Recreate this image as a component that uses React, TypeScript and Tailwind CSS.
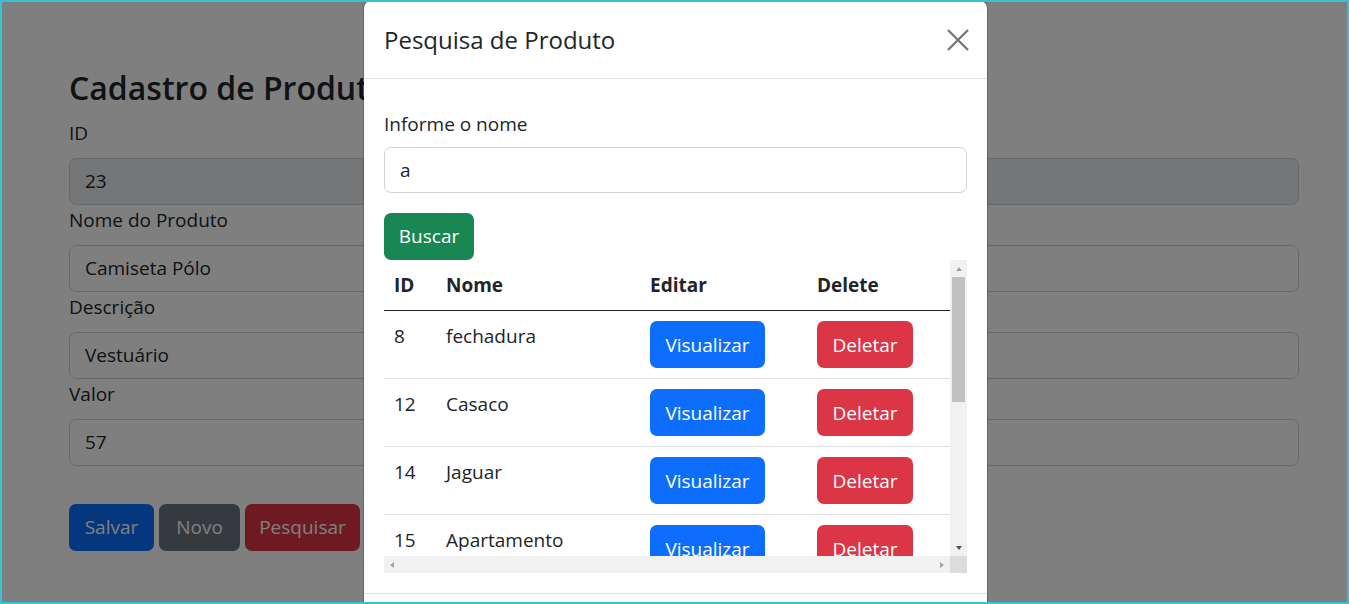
import React from 'react';

const produtos = [
  { id: 8, nome: 'fechadura' },
  { id: 12, nome: 'Casaco' },
  { id: 14, nome: 'Jaguar' },
  { id: 15, nome: 'Apartamento' },
];

function Field({ label, value, disabled }: { label: string; value: string; disabled?: boolean }) {
  return (
    <div>
      <label className="mb-[10px] block text-[19px] leading-[30px]">{label}</label>
      <div
        className={`flex h-[47px] items-center rounded-[7px] border border-[#ced4da] px-[15px] text-[19px] ${
          disabled ? 'bg-[#e9ecef]' : 'bg-white'
        }`}
      >
        {value}
      </div>
    </div>
  );
}

function Page() {
  return (
    <div className="pl-[67px] pr-[48px] pt-[67px]">
      <h2 className="mb-[11px] text-[32px] font-semibold leading-[38px]">Cadastro de Produto</h2>
      <Field label="ID" value="23" disabled />
      <Field label="Nome do Produto" value="Camiseta Pólo" />
      <Field label="Descrição" value="Vestuário" />
      <Field label="Valor" value="57" />
      <div className="mt-[38px] flex gap-[5px]">
        <button className="h-[47px] w-[85px] rounded-[7px] bg-[#0d6efd] text-[19px] text-white">Salvar</button>
        <button className="h-[47px] w-[81px] rounded-[7px] bg-[#6c757d] text-[19px] text-white">Novo</button>
        <button className="h-[47px] w-[115px] rounded-[7px] bg-[#dc3545] text-[19px] text-white">Pesquisar</button>
      </div>
    </div>
  );
}

function Arrow({ dir, color }: { dir: 'up' | 'down' | 'left' | 'right'; color: string }) {
  const pts = {
    up: '1,6 4,2 7,6',
    down: '1,2 4,6 7,2',
    left: '6,1 2,4 6,7',
    right: '2,1 6,4 2,7',
  }[dir];
  return (
    <svg width="8" height="8" viewBox="0 0 8 8">
      <polygon points={pts} fill={color} />
    </svg>
  );
}

function ResultTable() {
  return (
    <div className="grid grid-cols-[566px_17px] grid-rows-[296px_17px]">
      <div className="overflow-hidden">
        <table className="w-[566px] table-fixed border-collapse text-left text-[19px] leading-[30px]">
          <colgroup>
            <col className="w-[52px]" />
            <col className="w-[204px]" />
            <col className="w-[167px]" />
            <col className="w-[143px]" />
          </colgroup>
          <thead>
            <tr className="border-b border-[#212529]">
              <th className="p-[10px] font-bold">ID</th>
              <th className="p-[10px] font-bold">Nome</th>
              <th className="p-[10px] font-bold">Editar</th>
              <th className="p-[10px] font-bold">Delete</th>
            </tr>
          </thead>
          <tbody>
            {produtos.map(p => (
              <tr key={p.id} className="border-b border-[#dee2e6]">
                <td className="p-[10px] align-top">{p.id}</td>
                <td className="p-[10px] align-top">{p.nome}</td>
                <td className="p-[10px] align-top">
                  <button className="h-[47px] w-[115px] rounded-[7px] bg-[#0d6efd] text-white">Visualizar</button>
                </td>
                <td className="p-[10px] align-top">
                  <button className="h-[47px] w-[96px] rounded-[7px] bg-[#dc3545] text-white">Deletar</button>
                </td>
              </tr>
            ))}
          </tbody>
        </table>
      </div>
      {/* vertical scrollbar */}
      <div className="flex flex-col items-center bg-[#f1f1f1]">
        <div className="flex h-[17px] items-center justify-center">
          <Arrow dir="up" color="#a3a3a3" />
        </div>
        <div className="h-[125px] w-[13px] bg-[#c1c1c1]" />
        <div className="flex-1" />
        <div className="flex h-[17px] items-center justify-center">
          <Arrow dir="down" color="#505050" />
        </div>
      </div>
      {/* horizontal scrollbar */}
      <div className="flex items-center justify-between bg-[#f1f1f1] px-[4px]">
        <Arrow dir="left" color="#a3a3a3" />
        <Arrow dir="right" color="#a3a3a3" />
      </div>
      <div className="bg-[#dcdcdc]" />
    </div>
  );
}

function Modal() {
  return (
    <div className="absolute left-[361px] top-[-2px] w-[625px] rounded-t-[8px] border border-black/20 bg-white bg-clip-padding">
      <div className="flex h-[78px] items-center justify-between border-b border-[#dee2e6] pl-[20px] pr-[17px]">
        <h5 className="text-[24px] font-medium leading-[37px]">Pesquisa de Produto</h5>
        <svg width="24" height="24" viewBox="0 0 24 24">
          <path d="M2 2 L22 22 M22 2 L2 22" stroke="#737373" strokeWidth="2.2" />
        </svg>
      </div>
      <div className="px-[20px] pb-[20px] pt-[30px]">
        <label className="mb-[8px] block text-[19px] leading-[30px]">Informe o nome</label>
        <div className="flex h-[46px] items-center rounded-[7px] border border-[#ced4da] px-[15px] text-[19px]">a</div>
        <button className="mt-[20px] h-[47px] w-[90px] rounded-[7px] bg-[#198754] text-[19px] text-white">Buscar</button>
        <ResultTable />
      </div>
      <div className="h-[80px] border-t border-[#dee2e6]" />
    </div>
  );
}

export default function App() {
  return (
    <div className="relative h-[604px] w-[1349px] overflow-hidden border-2 border-[#36c1d6] bg-white font-['Open_Sans',sans-serif] text-[#212529]">
      <Page />
      <div className="absolute inset-0 bg-black/50" />
      <Modal />
    </div>
  );
}
